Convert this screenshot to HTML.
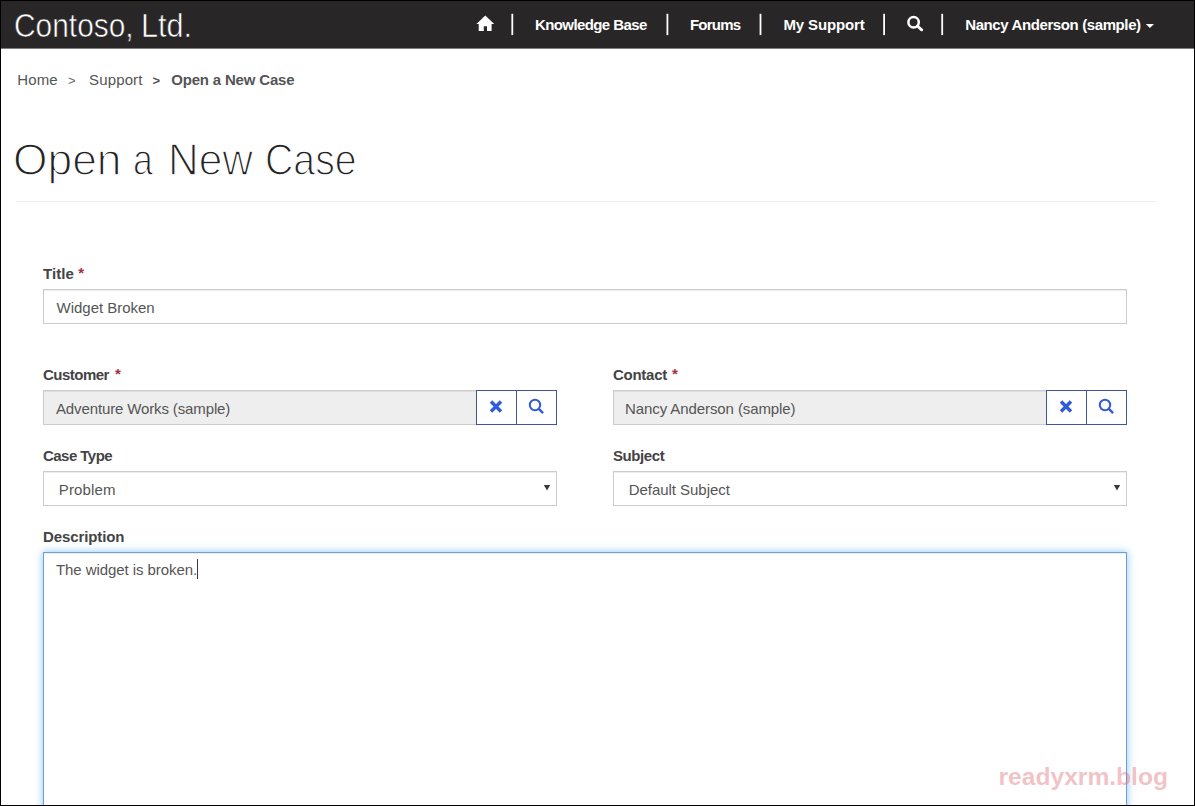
<!DOCTYPE html>
<html lang="en">
<head>
<meta charset="utf-8">
<title>Open a New Case - Contoso, Ltd.</title>
<style>
*{box-sizing:border-box;margin:0;padding:0}
h1{font-size:inherit;font-weight:400;height:0}
span.abs,label.abs{display:block}
html,body{width:1195px;height:806px;overflow:hidden;background:#fff}
body{position:relative;font-family:"Liberation Sans",sans-serif;color:#444;font-size:15px}
.abs{position:absolute;white-space:nowrap;line-height:1}
#frame{position:absolute;left:0;top:0;width:1195px;height:806px;border:1px solid #000;z-index:50;pointer-events:none}
#nav{position:absolute;left:1px;top:1px;width:1193px;height:48px;background:#282627;border-bottom:1px solid #7e7d7d}
.brand{left:15px;top:8px;font-size:34px;color:#fff;font-weight:400;transform-origin:0 0;transform:scaleX(.9);-webkit-text-stroke:.6px #282627}
.nl{color:#fff;font-weight:700;font-size:15px;top:17px}
.bc{top:72px;font-size:15px;color:#555}
.h1w{top:137px;font-size:45px;color:#232222;font-weight:400;transform-origin:0 0;transform:scaleX(.95);-webkit-text-stroke:1.4px #fff}
#hr{position:absolute;left:16px;top:201px;width:1141px;height:1px;background:#eee}
.lbl{font-weight:700;font-size:15px;color:#444}
.lbl b{color:#a5303f;font-weight:700}
.inp{position:absolute;height:35px;border:1px solid #ccc;background:#fff;box-shadow:inset 0 1px 1px rgba(0,0,0,.075)}
.inp.dis{background:#eee;border-right:0}
.val{font-size:15px;color:#555}
.btn{position:absolute;height:35px;width:41px;border:1px solid #3f54a2;background:#fff}
#ta{position:absolute;left:43px;top:552px;width:1084px;height:300px;border:1px solid #6c9fd4;background:#fff;box-shadow:inset 0 1px 1px rgba(0,0,0,.075),0 0 8px rgba(102,180,245,.78)}
#wm{left:998.5px;top:765px;font-size:24.6px;font-weight:700;color:rgba(226,120,125,.45)}
</style>
</head>
<body>
<nav id="nav"></nav>
<div class="abs brand" id="b1" style="left:14.3px;transform:scaleX(.879)">Contoso,</div>
<div class="abs brand" id="b2" style="left:141.3px;transform:scaleX(.9)">Ltd.</div>

<div class="abs nl" id="t_kb" style="left:535px;letter-spacing:-0.6px">Knowledge Base</div>
<div class="abs nl" id="t_forums" style="left:690px;letter-spacing:-0.79px">Forums</div>
<div class="abs nl" id="t_mysup" style="left:783.4px;letter-spacing:-0.12px">My Support</div>
<div class="abs nl" id="t_nancy" style="left:965.2px;letter-spacing:-0.39px">Nancy Anderson (sample)</div>

<svg class="abs" id="navsvg" style="left:0;top:0" width="1195" height="49" viewBox="0 0 1195 49">
<g fill="#fff">
<rect x="511.4" y="13.8" width="1.8" height="21.3"/>
<rect x="666.5" y="13.8" width="1.8" height="21.3"/>
<rect x="759.6" y="13.8" width="1.8" height="21.3"/>
<rect x="883.2" y="13.8" width="1.8" height="21.3"/>
<rect x="941.3" y="13.8" width="1.8" height="21.3"/>
<path d="M485.3 15.4 L476.4 23.9 H478.7 V31.1 H483.8 V26.3 H487 V31.1 H491.6 V23.9 H494.2 Z"/>
<path d="M1145.8 24 H1154 L1149.9 28.1 Z"/>
</g>
<circle cx="913.6" cy="22.2" r="5.2" fill="none" stroke="#fff" stroke-width="2.5"/>
<path d="M917.4 26 L921.7 29.8" stroke="#fff" stroke-width="2.9" stroke-linecap="round" fill="none"/>
</svg>

<div class="abs bc" id="t_bchome" style="left:17.3px;letter-spacing:0.12px">Home</div>
<div class="abs bc" id="g1" style="left:68px;top:73.5px;font-size:13px;color:#666">&gt;</div>
<div class="abs bc" id="t_bcsup" style="left:89px;letter-spacing:0.15px">Support</div>
<div class="abs bc" id="g2" style="left:152.5px;top:73.5px;font-size:13px;font-weight:700;color:#555">&gt;</div>
<div class="abs bc" id="t_bcbold" style="left:171.2px;letter-spacing:-0.18px;font-weight:700">Open a New Case</div>

<h1>
<span class="abs h1w" id="w1" style="left:13.2px;transform:scaleX(0.986)">Open</span>
<span class="abs h1w" id="w2" style="left:132.5px;transform:scaleX(0.793)">a</span>
<span class="abs h1w" id="w3" style="left:167.5px;transform:scaleX(0.944)">New</span>
<span class="abs h1w" id="w4" style="left:265px;transform:scaleX(0.872)">Case</span>
</h1>
<div id="hr"></div>

<label class="abs lbl" id="t_titlelbl" style="left:43px;letter-spacing:0.09px;top:266px">Title</label><div class="abs lbl" id="a1" style="left:78.2px;top:265px"><b>*</b></div>
<div class="inp" style="left:43px;top:289px;width:1084px"></div>
<div class="abs val" id="t_titleval" style="left:56.6px;letter-spacing:-0.03px;top:300px">Widget Broken</div>

<label class="abs lbl" id="t_custlbl" style="left:43px;letter-spacing:-0.51px;top:367px">Customer</label><div class="abs lbl" id="a2" style="left:115px;top:366px"><b>*</b></div>
<div class="inp dis" style="left:43px;top:390px;width:434px"></div>
<div class="abs val" id="t_custval" style="left:56px;letter-spacing:-0.13px;top:401px">Adventure Works (sample)</div>
<div class="btn" style="left:476px;top:390px"></div>
<div class="btn" style="left:516px;top:390px"></div>

<label class="abs lbl" id="t_contlbl" style="left:613px;letter-spacing:-0.27px;top:367px">Contact</label><div class="abs lbl" id="a3" style="left:672px;top:366px"><b>*</b></div>
<div class="inp dis" style="left:613px;top:390px;width:434px"></div>
<div class="abs val" id="t_contval" style="left:625px;letter-spacing:-0.09px;top:401px">Nancy Anderson (sample)</div>
<div class="btn" style="left:1046px;top:390px"></div>
<div class="btn" style="left:1086px;top:390px"></div>

<svg class="abs" style="left:476px;top:390px" width="82" height="36" viewBox="476 390 82 36">
<path d="M491 401.5 L501 411.5 M501 401.5 L491 411.5" stroke="#305cd8" stroke-width="3.5" fill="none"/>
<circle cx="535" cy="405" r="5.2" fill="none" stroke="#305cd8" stroke-width="2"/>
<path d="M538.6 408.7 L543.1 413.2" stroke="#305cd8" stroke-width="2.4" fill="none"/>
</svg>
<svg class="abs" style="left:1046px;top:390px" width="82" height="36" viewBox="476 390 82 36">
<path d="M491 401.5 L501 411.5 M501 401.5 L491 411.5" stroke="#305cd8" stroke-width="3.5" fill="none"/>
<circle cx="535" cy="405" r="5.2" fill="none" stroke="#305cd8" stroke-width="2"/>
<path d="M538.6 408.7 L543.1 413.2" stroke="#305cd8" stroke-width="2.4" fill="none"/>
</svg>
<label class="abs lbl" id="t_caselbl" style="left:43px;letter-spacing:-0.54px;top:448px">Case Type</label>
<div class="inp" style="left:43px;top:471px;width:514px"></div>
<div class="abs val" id="t_caseval" style="left:58.8px;letter-spacing:0.15px;top:482px">Problem</div>
<svg class="abs" style="left:541px;top:483px" width="12" height="10" viewBox="541 483 12 10"><path d="M543.8 485 H550.2 L547 490.6 Z" fill="#3a3a3a"/></svg>

<label class="abs lbl" id="t_subjlbl" style="left:613px;letter-spacing:-0.42px;top:448px">Subject</label>
<div class="inp" style="left:613px;top:471px;width:514px"></div>
<div class="abs val" id="t_subjval" style="left:628.8px;letter-spacing:-0.05px;top:482px">Default Subject</div>
<svg class="abs" style="left:1111px;top:483px" width="12" height="10" viewBox="1111 483 12 10"><path d="M1113.8 485 H1120.2 L1117 490.6 Z" fill="#3a3a3a"/></svg>

<label class="abs lbl" id="t_desclbl" style="left:43px;letter-spacing:-0.11px;top:529px">Description</label>
<div id="ta"></div>
<div class="abs val" id="t_descval" style="left:56px;letter-spacing:-0.07px;top:562px">The widget is broken.</div>

<div style="position:absolute;left:197px;top:559px;width:1px;height:20px;background:#3a3a3a"></div>
<div class="abs" id="wm">readyxrm.blog</div>
<div id="frame"></div>
</body>
</html>
